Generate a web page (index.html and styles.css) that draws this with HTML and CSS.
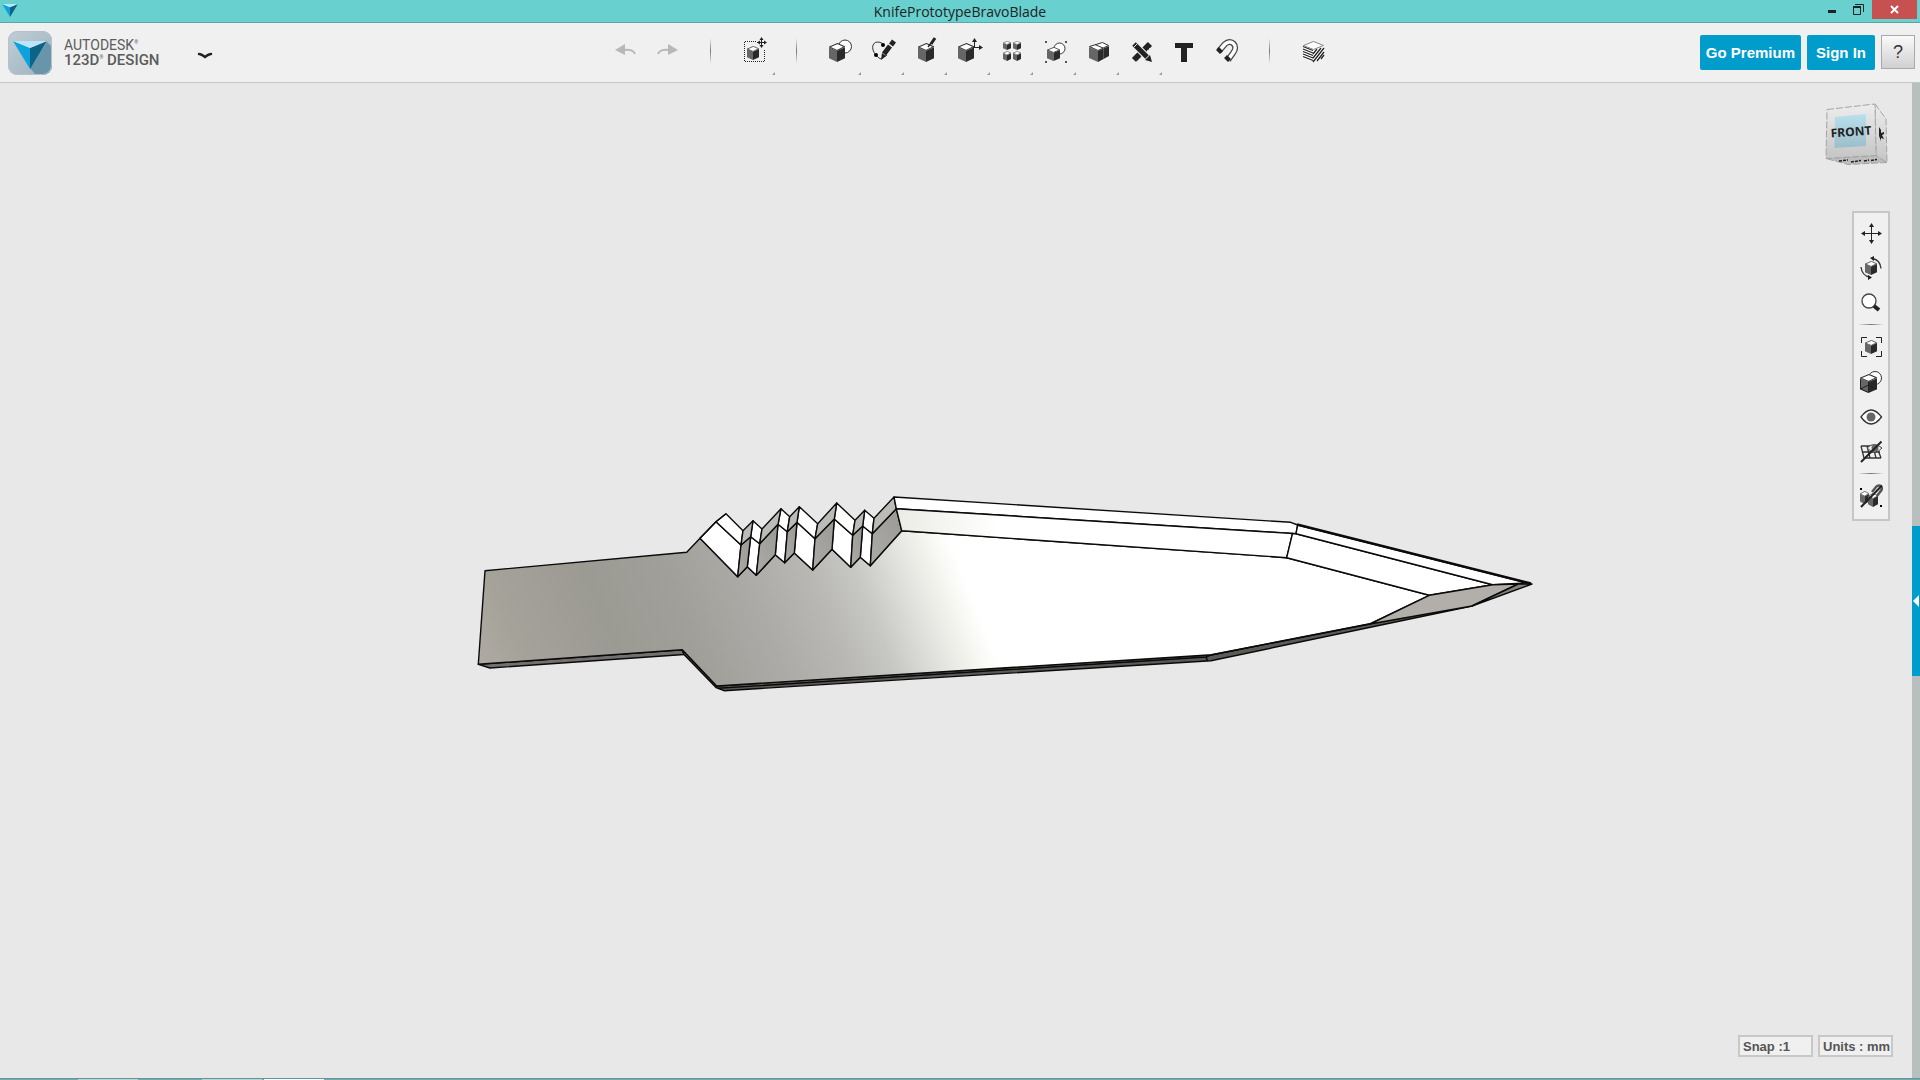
FILE: index.html
```html
<!DOCTYPE html>
<html lang="en">
<head>
	<meta charset="utf-8">
	<title>KnifePrototypeBravoBlade</title>
	<meta name="viewport" content="width=device-width, initial-scale=1">
	<link rel="stylesheet" href="styles.css">
</head>
<body>

	<!-- shared cube, reused by most of the icons -->
	<svg class="defs" aria-hidden="true">
		<symbol id="cube" viewBox="0 0 16 18" preserveAspectRatio="none">
			<path d="M0 4 8 7.5V18L0 14.5z" fill="#666"/>
			<path d="M8 7.5 16 4v10.5L8 18z" fill="#2a2a2a"/>
			<path d="M.5 3.8 8.5.5l7 3L8 7z" fill="#fff" stroke="#333"/>
		</symbol>
		<symbol id="mark" viewBox="0 0 34 28">
			<path d="M0 0 17 7v21z" fill="#0ba3dc"/>
			<path d="M34 0 17 7v21z" fill="#0c6387"/>
			<path d="M0 0h34L17 7z" fill="#b9e6f8"/>
		</symbol>
	</svg>

	<div class="titlebar">
		<svg class="title-mark"><use href="#mark"/></svg>
		<h1>KnifePrototypeBravoBlade</h1>
		<div class="window-buttons">
			<button class="win" aria-label="Minimize"><svg width="11" height="11"><path d="M1 8h8v3H1z" fill="#222"/></svg></button>
			<button class="win" aria-label="Restore"><svg width="11" height="11" fill="none" stroke="#222"><path d="M.5 3h7v7.500h-7z"/><path d="M0 3h8" stroke-width="2"/><path d="M2 .5h8.500V8"/></svg></button>
			<button class="win close" aria-label="Close"><svg width="11" height="11"><path d="m2 2 7 7M9 2 2 9" stroke="#fff" stroke-width="2"/></svg></button>
		</div>
	</div>

	<header class="header">
		<div class="brand">
			<svg class="logo" viewBox="0 0 44 44">
				<defs><clipPath id="tile"><rect width="44" height="44" rx="9"/></clipPath>
				<linearGradient id="tileFill" x2="1" y2="1"><stop stop-color="#c0cdd6"/><stop offset="1" stop-color="#9eb2c0"/></linearGradient></defs>
				<g clip-path="url(#tile)">
					<rect width="44" height="44" fill="url(#tileFill)"/>
					<path d="m39 11 8 8v30H32L22 37z" fill="#6895a9"/>
				</g>
				<rect x=".5" y=".5" width="43" height="43" rx="9" fill="none" stroke="#b4c2cc"/>
				<use href="#mark" x="5" y="10" width="34" height="28"/>
			</svg>
			<div class="brand-name"><span>AUTODESK<sup>®</sup></span><strong>123D<sup>®</sup> DESIGN</strong></div>
			<button class="app-menu" aria-label="Menu"><svg width="16" height="8"><path d="M2 2q2 0 6 3 4-3 6-3" fill="none" stroke="#222" stroke-width="2.500" stroke-linecap="round"/></svg></button>
		</div>

		<nav class="toolbar">
			<button disabled aria-label="Undo"><svg viewBox="0 0 31 31"><path d="m5 14 10-6v11z" fill="#b8b8b8"/><path d="M14 14c6-1 10 1 11 4" fill="none" stroke="#b8b8b8" stroke-width="2"/></svg></button>
			<button disabled aria-label="Redo"><svg viewBox="0 0 31 31"><path d="M25 14 15 8v11z" fill="#b8b8b8"/><path d="M16 14c-6-1-10 1-11 4" fill="none" stroke="#b8b8b8" stroke-width="2"/></svg></button>
			<span class="sep"></span>
			<button class="more" aria-label="Transform"><svg viewBox="0 0 31 31">
				<path d="M17 5.500H5.500v20h20V13" fill="none" stroke="#222" stroke-dasharray="1 1"/>
				<use href="#cube" x="8" y="10" width="12" height="14"/>
				<path d="M22.500 3v8M18 6.500h9" stroke="#222"/><path d="m22.500 1 2 3h-4zM22.500 12l2-3h-4zM18 6.500l3-2v4zM28 6.500l-3-2v4z" fill="#222"/>
			</svg></button>
			<span class="sep"></span>
			<button class="more" aria-label="Primitives"><svg viewBox="0 0 31 31"><circle cx="20" cy="10.500" r="6.500" fill="#fff" stroke="#333"/><use href="#cube" x="4" y="7" width="16" height="19"/></svg></button>
			<button class="more" aria-label="Sketch"><svg viewBox="0 0 31 31">
				<path d="M15 8C10 4 3 6 5 14q1 3 3 5 2 3 5 4l6-4" fill="none" stroke="#333"/>
				<circle cx="15" cy="9" r="2"/><circle cx="8" cy="19" r="2"/>
				<path d="m13 24 1-7 4 3z" fill="#222"/><path d="m16 18 6-8" stroke="#222" stroke-width="5"/><path d="m23 9 3-4" stroke="#222" stroke-width="5"/>
			</svg></button>
			<button class="more" aria-label="Construct"><svg viewBox="0 0 31 31"><use href="#cube" x="7" y="7" width="16" height="19"/><path d="m17 11 4-5" stroke="#222" stroke-width="1.500"/><path d="m20 8 4-6" stroke="#222" stroke-width="3"/></svg></button>
			<button class="more" aria-label="Modify"><svg viewBox="0 0 31 31"><use href="#cube" x="4" y="7" width="16" height="19"/><path d="M20.500 4v8M19 11.500h8" stroke="#222"/><path d="m20.500 2 2.500 4h-5zM29 11.500l-4-2.500v5z" fill="#222"/></svg></button>
			<button class="more" aria-label="Pattern"><svg viewBox="0 0 31 31"><use href="#cube" x="6" y="5" width="8" height="9"/><use href="#cube" x="16" y="5" width="8" height="9"/><use href="#cube" x="6" y="15" width="8" height="10"/><use href="#cube" x="16" y="15" width="8" height="10"/></svg></button>
			<button class="more" aria-label="Grouping"><svg viewBox="0 0 31 31"><path d="M5 5h2v2H5zM25 5h2v2h-2zM5 25h2v2H5zM25 25h2v2h-2z" fill="#555"/><circle cx="19.500" cy="12.500" r="5.500" fill="#fff" stroke="#333"/><use href="#cube" x="7" y="11" width="13" height="14"/></svg></button>
			<button class="more" aria-label="Combine"><svg viewBox="0 0 31 31">
				<path d="m6 11 9 4v11l-9-4z" fill="#666"/><path d="m15 15 11-5v10l-11 6z" fill="#2a2a2a"/>
				<path d="m6.500 10.500 13-4 6 3L15 14.500z" fill="#fff" stroke="#333"/><path d="m12 8.500 8 3.500" fill="none" stroke="#333"/><path d="M20.500 13v10" stroke="#555"/>
			</svg></button>
			<button class="more" aria-label="Measure"><svg viewBox="0 0 31 31">
				<path d="M8 24 24 8" stroke="#222" stroke-width="6"/><path d="m11 26 15-15" stroke="#f0f0f0" stroke-width="2" stroke-dasharray="1 2"/>
				<path d="m9 9 12 12" stroke="#f0f0f0" stroke-width="7"/><path d="m8 8 13 13" stroke="#222" stroke-width="5"/><path d="m26 26-7-2 5-5z" fill="#222"/><path d="m11 8-3 3" stroke="#f0f0f0"/>
			</svg></button>
			<button aria-label="Text"><svg viewBox="0 0 31 31"><path d="M6 7h18v5h-6v14h-6V12H6z" fill="#222"/></svg></button>
			<button aria-label="Snap"><svg viewBox="0 0 31 31">
				<path d="m7 15 6-7C19 2 27 10 21 17l-5 7" fill="none" stroke="#444" stroke-width="6"/>
				<path d="m7 15 6-7C19 2 27 10 21 17l-5 7" fill="none" stroke="#fff" stroke-width="3.500"/>
				<path d="m4 14 3-3 4 4-3 3zM12 22l3-3 4 4-3 3z" fill="#222"/>
			</svg></button>
			<span class="sep"></span>
			<button aria-label="Material"><svg viewBox="0 0 31 31">
				<path d="m5 10 10 4v12L5 22zM15 14l11-4v12l-11 4z" fill="#fff"/>
				<path d="m5 10.500 10 4M5 13l10 4M5 15.500l10 4M5 18l10 4M5 20.500l10 4M15 18l4-5M15 22l8-10M15 26l11-14M19 25l7-9M23 23l3-4" stroke="#222" stroke-width="1.300"/>
				<path d="m5.500 9.500 10-4 10 4-10 4z" fill="#fff" stroke="#888"/>
			</svg></button>
		</nav>

		<div class="account">
			<button class="primary">Go Premium</button>
			<button class="primary">Sign In</button>
			<button class="help">?</button>
		</div>
	</header>

	<div class="workspace">
		<main class="canvas">
			<svg class="model" viewBox="0 83 1912 995" role="img" aria-label="Knife blade model">
				<defs>
					<linearGradient id="steel" gradientUnits="userSpaceOnUse" x1="509" y1="785" x2="974" y2="600">
						<stop stop-color="#b2aea7"/><stop offset=".12" stop-color="#a5a29a"/><stop offset=".3" stop-color="#9b9a93"/>
						<stop offset=".45" stop-color="#a09f99"/><stop offset=".6" stop-color="#acaba8"/><stop offset=".72" stop-color="#b9b8b5"/><stop offset=".8" stop-color="#c7c7c4"/><stop offset=".88" stop-color="#dfdfdc"/><stop offset=".95" stop-color="#f4f4ef"/><stop offset="1" stop-color="#fff"/>
					</linearGradient>
					<linearGradient id="bevel" gradientUnits="userSpaceOnUse" x1="896" y1="0" x2="1000" y2="0">
						<stop stop-color="#ebece5"/><stop offset="1" stop-color="#fff"/>
					</linearGradient>
					<linearGradient id="notch" x1="1" y1="0" x2="0" y2="1"><stop stop-color="#9a9994"/><stop offset="1" stop-color="#acaba8"/></linearGradient>
				</defs>
				<g stroke="#0a0a0a" stroke-width="1.400" stroke-linejoin="round">
					<!-- underside -->
					<path fill="#74706d" d="M478.300 664.300 490 668l194-13.500-1.700-4.800z"/>
					<path fill="#5c5a56" d="m682.300 649.700 1.700 4.800 32 33 8 3.200 487-30L1472 606l-102 17-158 31.700-495 31.300z"/>
					<!-- front face -->
					<path fill="url(#steel)" d="M485 570.700 686.700 552.300 700 538.300l37.700 38.400 9.600-10 9 8.600 19-20.600 9.400 8 9.600-9.700 18.400 17 19.300-20.700 18.700 18 9.600-10 10 8.400 31.400-35 385 27 142.600 37.600L1370 624l-158 30.700-495.300 31.300-34.400-36.300-204 14.600z"/>
					<path fill="none" d="M718 688.300 1206 657l1.500 4M1206 657l6-2.300"/>
					<!-- notches, lower row -->
					<g fill="#fff">
						<path d="m716 521.700 25 23.300-3.300 31.700L700 538.300z"/>
						<path d="m750.700 536.700 9 7-3.400 31.600-9-8.600z"/>
						<path d="m778 524.300 9.300 7.400-2.600 31-9.400-8z"/>
						<path d="m797 522.300 18 16.400-2.300 31.300-18.400-17z"/>
						<path d="m834.300 519 18.400 16.300-2 32-18.700-18z"/>
						<path d="m862.700 526 9.600 7.700-2 32-10-8.400z"/>
					</g>
					<g fill="url(#notch)">
						<path d="m741 545 9.700-8.300-3.400 30-9.600 10z"/>
						<path d="m759.700 543.700 18.300-19.400-2.700 30.400-19 20.600z"/>
						<path d="m787.300 531.700 9.700-9.400-2.700 30.700-9.600 9.700z"/>
						<path d="m815 538.700 19.300-19.700-2.300 30.300-19.300 20.700z"/>
						<path d="m852.700 535.300 10-9.300-2.400 31.300-9.600 10z"/>
						<path d="m872.300 533.700 24-25 5.400 22-31.400 35z"/>
					</g>
					<!-- notches, upper row -->
					<g fill="#fff">
						<path d="m726 513.700 17 17-2 14.300-25-23.300z"/>
						<path d="m753 520.700 9 8.300-2.300 14.700-9-7z"/>
						<path d="m781 508.700 8.700 8-2.400 15-9.300-7.400z"/>
						<path d="m799.300 506.700 18.400 17-2.700 15-18-16.400z"/>
						<path d="m836.700 503 18.300 17.300-2.300 15-18.400-16.300z"/>
						<path d="m864.700 510.300 9.300 8-1.700 15.400-9.600-7.700z"/>
					</g>
					<g fill="#bbbbb7">
						<path d="m743 530.700 10-10-2.300 16-9.700 8.300z"/>
						<path d="m762 529 19-20.300-3 15.600-18.300 19.400z"/>
						<path d="m789.700 516.700 9.600-10-2.300 15.600-9.700 9.400z"/>
						<path d="m817.700 523.700 19-20.700-2.400 16-19.300 19.700z"/>
						<path d="m855 520.300 9.700-10-2 15.700-10 9.300z"/>
						<path d="m874 518.300 20-21.300 2.300 11.700-24 25z"/>
					</g>
					<path fill="none" d="m700 538.300 16-16.600 10-8"/>
					<!-- spine and bevel -->
					<path fill="#fff" d="m894 497 396.700 25.300 7 2.700-1.700 8.700-399.700-25z"/>
					<path fill="url(#bevel)" d="m896.300 508.700 396.200 24.800-5.800 24.200-385-27z"/>
					<path fill="#fff" d="m1292.500 533.500 3.500.2 196.700 51-63.400 10.600-142.600-37.600z"/>
					<path fill="#fff" d="M1297.700 525 1527 583l-34.300 1.700-196.700-51z"/>
					<path fill="#b2aeaa" d="m1429.300 595.300 63.400-10.600 25.600-.7-46.300 22-102 18z"/>
					<path fill="#85817e" d="m1518.300 584 13.700 0-60 22z"/>
					<path fill="none" stroke-width="2.500" d="m1297 524.500 234 59"/>
					<path fill="none" d="m1211.700 654.700 158.300-31"/>
				</g>
			</svg>

			<svg class="viewcube" viewBox="0 0 64 64" role="img" aria-label="View cube">
				<defs>
					<linearGradient id="cubeFront" x2="0" y2="1"><stop stop-color="#ededed"/><stop offset="1" stop-color="#c5c5c5"/></linearGradient>
					<linearGradient id="cubeBlue" x2="0" y2="1"><stop stop-color="#b9e0ee"/><stop offset="1" stop-color="#9cbecb"/></linearGradient>
				</defs>
				<g stroke="#a4a4a4" stroke-dasharray="7 2">
					<path d="m1 55.500 50-3 11 7-39 2z" fill="#bdbdbd"/>
					<path d="m50 1 11 15 1 43.500-11-7z" fill="url(#cubeFront)"/>
					<path d="M2 6.500 50 1l1 51.500-50 3z" fill="url(#cubeFront)"/>
				</g>
				<path d="m10 14 31-3v32l-31.500 2z" fill="url(#cubeBlue)"/>
				<text x="26" y="33" transform="rotate(-4 26 29)" class="face">FRONT</text>
				<path d="m54 24 2 3v3l3-1v2l-2 1 2 4-3-1v3l-2-5z" fill="#222"/>
				<path d="m14 58 9-1M26 59l10-1.500M39 58l5-1M46 57.500l6-1" stroke="#222" stroke-width="1.500" stroke-dasharray="3 1"/>
			</svg>

			<nav class="navbar">
				<button aria-label="Pan"><svg viewBox="0 0 24 24"><path d="M12.500 4v17M4 12.500h17" stroke="#222"/><path d="m12.500 2 2.500 4h-5zM12.500 23l2.500-4h-5zM2 12.500 6 10v5zM23 12.500 19 10v5z" fill="#222"/></svg></button>
				<button aria-label="Orbit"><svg viewBox="0 0 24 24"><use href="#cube" x="6" y="5" width="12" height="14"/><path d="M13 2.500q8 1 9 10M2 11q1 9 9 10" fill="none" stroke="#333" stroke-width="1.300"/><path d="m11 2 4-2v5zM13 21.500l-4-2.500v5z" fill="#222"/></svg></button>
				<button aria-label="Zoom"><svg viewBox="0 0 24 24"><circle cx="10" cy="10" r="7" fill="#fff" stroke="#444" stroke-width="1.300"/><path d="m15 15 5 4" stroke="#222" stroke-width="4"/></svg></button>
				<span class="rule"></span>
				<button aria-label="Fit"><svg viewBox="0 0 24 24"><path d="M8 2.500H2.500V8M17 2.500h5.500V8M2.500 16v5.500H8M22.500 16v5.500H17" fill="none" stroke="#222"/><use href="#cube" x="6" y="5" width="12" height="14"/></svg></button>
				<button aria-label="Display style"><svg viewBox="0 0 24 24"><circle cx="16" cy="8" r="6.500" fill="#fff" stroke="#333"/><use href="#cube" x="1" y="4" width="17" height="19"/><path d="M1.500 9v10l8 3.500M9.500 12v10M1.500 19l8-4 8 4" fill="none" stroke="#222"/></svg></button>
				<button aria-label="Visibility"><svg viewBox="0 0 24 24"><path d="M2 12q10-14 20.500 0Q12 26 2 12z" fill="#fff" stroke="#333" stroke-width="1.300"/><circle cx="12" cy="12" r="4.500" fill="#666"/></svg></button>
				<button aria-label="Grid"><svg viewBox="0 0 24 24"><path d="M2 6h15M3 12h18M5 18h17M2 6l3 12M8 6l3 12M14 6l3 12M19 10l3 8" fill="none" stroke="#333" stroke-width="1.300"/><path d="M8 8q7-7 15 0-7 8-15 0z" fill="#f0f0f0" stroke="#444"/><circle cx="16" cy="8" r="3.500" fill="#666"/><path d="M2 22 22.500 1.500" stroke="#222" stroke-width="2"/></svg></button>
				<span class="rule"></span>
				<button aria-label="Snap off"><svg viewBox="0 0 24 24"><use href="#cube" x="1" y="7" width="9" height="13"/><use href="#cube" x="9" y="9" width="10" height="14"/><path d="m13 8 4-5c4-4 8 1 4 5l-3 4" fill="none" stroke="#555" stroke-width="2.500"/><path d="M1 4h2v2H1zM21 21h2v2h-2z"/><path d="M2 23 23 1.500" stroke="#222" stroke-width="2"/></svg></button>
			</nav>

			<div class="status">
				<button>Snap :1</button>
				<button>Units : mm</button>
			</div>
		</main>
		<aside class="drawer">
			<button class="drawer-handle" aria-label="Open panel"><svg width="6" height="12"><path d="M0 6 6 0v12z" fill="#fff"/></svg></button>
		</aside>
	</div>

	<div class="taskbar"><span></span><span></span><span class="active"></span></div>
</body>
</html>
```
FILE: styles.css
```css
*{
	box-sizing: border-box;
}

body,html{
	margin: 0;
	height: 100%;
}

body{
	display: flex;
	flex-direction: column;
	overflow: hidden;
	background: #e8e8e8;
	font-family: "Liberation Sans", Arial, sans-serif;
}

button{
	border: 0;
	padding: 0;
	margin: 0;
	background: none;
	font: inherit;
	color: inherit;
}

svg{
	display: block;
}

.defs{
	position: absolute;
	width: 0;
	height: 0;
}

/* title bar */
.titlebar{
	display: grid;
	grid-template-columns: 1fr auto 1fr;
	height: 23px;
	flex: none;
	background: #68d0ce;
	border-bottom: 1px solid #55a9a7;
}

.title-mark{
	width: 16px;
	height: 13px;
	margin: 4px 0 0 2px;
}

.titlebar h1{
	margin: 0;
	font: 14px/23px "Open Sans", sans-serif;
	color: #222;
}

.window-buttons{
	display: flex;
	justify-content: flex-end;
	padding-right: 3px;
}

.win{
	display: flex;
	justify-content: center;
	width: 26px;
	height: 19px;
	padding-top: 4px;
}

.win:first-child{
	padding-top: 2px;
}

.close{
	width: 45px;
	margin-left: 1px;
	background: #c75050;
}

/* header */
.header{
	display: grid;
	grid-template-columns: 1fr auto 1fr;
	align-items: center;
	height: 60px;
	flex: none;
	background: #f0f0f0;
	border-bottom: 1px solid #c6c6c6;
}

.brand{
	display: flex;
	align-items: center;
	padding-left: 8px;
}

.logo{
	width: 44px;
	height: 44px;
}

.brand-name{
	margin-left: 12px;
	font-family: Roboto, sans-serif;
	color: #5c5c5c;
}

.brand-name span,
.brand-name strong{
	display: block;
	line-height: 15px;
	white-space: nowrap;
}

.brand-name span{
	font-size: 14px;
	font-weight: 400;
}

.brand-name strong{
	font-size: 15px;
	font-weight: 500;
}

.brand-name sup{
	font-size: 5px;
	line-height: 0;
	vertical-align: 6px;
}

.app-menu{
	margin: 7px 0 0 37px;
}

.toolbar{
	display: flex;
	height: 100%;
	margin-left: 19px;
}

.toolbar button{
	position: relative;
	width: 43px;
	padding: 13px 6px 15px;
}

.toolbar svg{
	width: 31px;
	height: 31px;
}

.toolbar .more::after{
	content: "";
	position: absolute;
	right: 1px;
	bottom: 7px;
	border-style: solid;
	border-width: 0 0 3px 3px;
	border-color: transparent transparent #999 transparent;
}

.sep{
	width: 1px;
	height: 26px;
	margin: 15px 22px 15px 20px;
	background: linear-gradient(transparent, #777, transparent);
}

.account{
	display: flex;
	justify-content: flex-end;
	gap: 6px;
	padding-right: 5px;
}

.primary{
	height: 35px;
	padding: 0 6px;
	border-radius: 2px;
	background: #009ccc;
	color: #fff;
	font-size: 15px;
	font-weight: bold;
	white-space: nowrap;
}

.primary + .primary{
	padding: 0 9px;
}

.help{
	width: 34px;
	height: 34px;
	border: 1px solid #aaa;
	background: linear-gradient(#fafafa, #d0d0d2);
	font-size: 18px;
	color: #333;
}

/* workspace */
.workspace{
	display: flex;
	flex: 1;
	min-height: 0;
}

.canvas{
	position: relative;
	flex: 1;
	min-width: 0;
}

.model{
	width: 100%;
	height: 100%;
}

.viewcube{
	position: absolute;
	top: 20px;
	right: 23px;
	width: 64px;
	height: 64px;
}

.face{
	font: bold 12px "Noto Sans", sans-serif;
	text-anchor: middle;
	fill: #222;
}

.navbar{
	position: absolute;
	top: 128px;
	right: 22px;
	display: flex;
	flex-direction: column;
	width: 38px;
	padding: 3px 0 5px;
	border: 2px solid #c6c6c6;
	background: #f0f0f0;
}

.navbar button{
	height: 35px;
	padding: 5px 5px 6px;
}

.navbar svg{
	width: 24px;
	height: 24px;
}

.rule{
	height: 1px;
	margin: 3px 4px 5px;
	background: linear-gradient(90deg, transparent, #777, transparent);
}

.status{
	position: absolute;
	right: 19px;
	bottom: 21px;
	display: flex;
	gap: 5px;
}

.status button{
	width: 75px;
	height: 22px;
	padding: 0 0 0 3px;
	border: 2px solid #c8c8c8;
	background: #f0f0f0;
	color: #555;
	font-size: 13px;
	font-weight: bold;
	text-align: left;
	white-space: nowrap;
}

.drawer{
	display: flex;
	align-items: center;
	width: 8px;
	background: #b7c0bf;
}

.drawer-handle{
	display: flex;
	align-items: center;
	width: 8px;
	height: 150px;
	padding-left: 1px;
	margin-bottom: -40px;
	background: #009ccc;
}

/* sliver of the taskbar under the window */
.taskbar{
	display: flex;
	flex: none;
	gap: 2px;
	height: 2px;
	padding-left: 78px;
	background: #74aaa9;
	border-top: 1px solid #5c9a99;
}

.taskbar span{
	width: 60px;
	height: 1px;
	background: #b9d5d4;
}

.taskbar span:first-child{
	margin-right: 62px;
}

.taskbar .active{
	background: #fff;
}
```
